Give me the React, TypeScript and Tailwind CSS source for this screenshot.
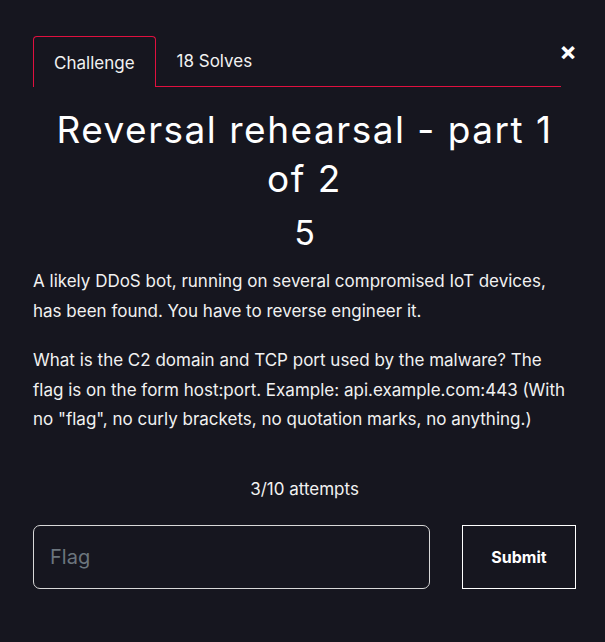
export default function App() {
  return (
    <div className="min-h-[642px] w-full bg-[#16161f] text-white" style={{ fontFamily: "Inter, 'Noto Sans', sans-serif" }}>
      <div className="pl-[33px] pr-[29px] pt-[35px]">
        {/* Tabs */}
        <div className="flex items-end border-b border-[#e0103f] mr-[15px]">
          <button className="h-[51px] px-[20px] pt-[3px] text-[17px] text-[#f1f1f1] border border-[#e0103f] border-b-0 rounded-t-[4px] -mb-px bg-[#16161f]">
            Challenge
          </button>
          <button className="h-[51px] px-[21px] pt-[3px] text-[17px] text-[#f1f1f1]">18 Solves</button>
        </div>
        <button className="absolute right-[28px] top-[39px] text-[26px] font-bold leading-none text-white">×</button>

        {/* Title */}
        <h1 className="mt-[18px] px-[20px] text-center text-[37px] leading-[49px] tracking-[1.5px] font-normal">
          Reversal rehearsal - part 1 of 2
        </h1>
        <div className="mt-[10px] text-center text-[34px] leading-[40px]">5</div>

        {/* Description */}
        <div className="mt-[14px] text-[17px] leading-[29.5px] text-[#f1f1f1]">
          <p>A likely DDoS bot, running on several compromised IoT devices, has been found. You have to reverse engineer it.</p>
          <p className="mt-[20px]">
            What is the C2 domain and TCP port used by the malware? The flag is on the form host:port. Example: api.example.com:443 (With no "flag", no curly brackets, no quotation marks, no anything.)
          </p>
        </div>

        <div className="mt-[42px] text-center text-[17px] text-[#f1f1f1]">3/10 attempts</div>

        {/* Form */}
        <div className="mt-[23px] flex gap-[32px]">
          <input
            placeholder="Flag"
            className="h-[64px] flex-1 rounded-[7px] border border-[#d8d8d8] bg-transparent px-[16px] text-[20px] text-white placeholder:text-[#6c757d] outline-none"
          />
          <button className="h-[64px] w-[114px] border border-white text-[16px] font-bold">Submit</button>
        </div>
      </div>
    </div>
  );
}
